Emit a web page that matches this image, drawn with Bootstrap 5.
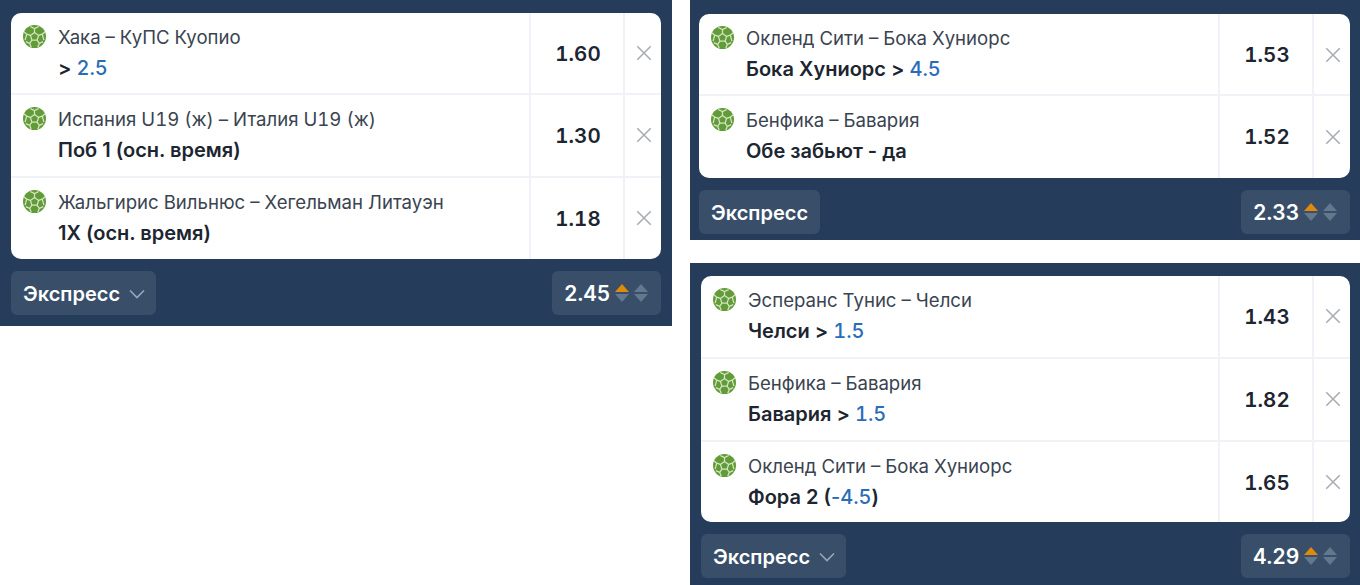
<!DOCTYPE html>
<html lang="en">
<head>
  <meta charset="UTF-8" />
  <meta name="viewport" content="width=device-width, initial-scale=1.0"/>
  <title>Coupons</title>
  <link href="https://cdn.jsdelivr.net/npm/bootstrap@5.3.2/dist/css/bootstrap.min.css" rel="stylesheet" />
  <style>
    body {
      background-color: #fff;
      font-family: Inter, "Liberation Sans", sans-serif;
      margin: 0;
      width: 1360px;
      height: 585px;
      overflow: hidden;
    }
    .col-left { width: 672px; margin-right: 18px; }
    .col-right { width: 670px; gap: 23px; }
    .slip { background-color: #253d5b; }
    .slip-a { height: 326px; padding: 13px 11px 11px 11px; }
    .slip-b { height: 240px; padding: 14px 10px 6px 9px; }
    .slip-c { height: 322px; padding: 13px 10px 6px 11px; }
    .bets { background-color: #fff; border-radius: 10px; overflow: hidden; }
    .bet { height: 82px; border-bottom: 2px solid #f1f2f7; }
    .bet:last-child { border-bottom: 0; }
    .slip-a .bet:nth-child(2) { height: 83px; }
    .slip-a .bet:last-child { height: 81px; }
    .slip-c .bet { height: 83px; }
    .slip-c .bet:last-child { height: 80px; }
    .bet-main { padding: 10px 0 0 12px; gap: 12px; min-width: 0; }
    .ball { width: 23px; height: 23px; flex: none; margin-top: 2px; }
    .teams { font-size: 18.6px; line-height: 28px; color: #3a4350; white-space: nowrap; font-variant-numeric: tabular-nums; }
    .pick { font-size: 20px; line-height: 28px; margin-top: 3px; font-weight: 600; color: #1c2530; white-space: nowrap; }
    .pick span { color: #2b6cb8; font-weight: 500; font-variant-numeric: tabular-nums; }
    .pick span.neg { font-variant-numeric: normal; }
    .rate { width: 94px; padding: 28px 0 0 3px; line-height: 26px; border-left: 2px solid #f1f2f7; font-size: 20.5px; font-weight: 600; color: #1c2530; font-variant-numeric: tabular-nums; }
    .drop { width: 38.500px; padding: 31px 0 0 2px; border-left: 2px solid #f1f2f7; }
    .slip-b .drop { padding-top: 32px; }
    .drop svg { width: 18px; height: 18px; }
    .slip-foot { margin-top: 12px; }
    .pill { height: 44px; padding-top: 1px; background-color: #384e69; border-radius: 6px; color: #fff; font-size: 20px; font-weight: 600; }
    .pill-type { padding-left: 12px; padding-right: 12px; gap: 9px; }
    .pill-type svg { width: 16px; height: 10px; margin-right: -1px; }
    .pill-odd { width: 109px; padding-left: 12px; font-size: 21px; font-variant-numeric: tabular-nums; gap: 5px; }
    .arrows { gap: 4px; }
    .arrow-pair { width: 15px; gap: 2px; margin-top: -1px; }
    .tri { width: 0; height: 0; border-left: 7.5px solid transparent; border-right: 7.5px solid transparent; }
    .tri-up { border-bottom: 8px solid #63778f; }
    .tri-down { border-top: 8px solid #63778f; }
    .tri-up.on { border-bottom-color: #e08a0c; }
  </style>
</head>
<body>
  <svg class="d-none">
    <symbol id="ball" viewBox="0 0 24 24">
      <circle cx="12" cy="12" r="12" fill="#619c38"/>
      <path d="M12 7.800l4.300 3.100-1.600 5h-5.400l-1.600-5z" fill="#619c38" stroke="#d5e4c3" stroke-width="1.300"/>
      <path d="M12 7.800V3.800M16.300 10.900l3.800-1.300M14.700 15.900l2.400 3.200M9.300 15.900l-2.400 3.200M7.700 10.900L3.900 9.600" stroke="#d5e4c3" stroke-width="1.300" fill="none"/>
      <path d="M7.500 1.500L12 3.800l4.500-2.300M20.100 9.600l3-2.600M20.100 9.600l1.700 6.100M17.100 19.100l4-1.700M17.100 19.100l-1.700 4.100M6.900 19.100l1.700 4.100M6.900 19.100l-4-1.700M3.900 9.600l-1.700 6.100M3.900 9.600L.9 7" stroke="#d5e4c3" stroke-width="1.300" fill="none"/>
    </symbol>
    <symbol id="cross" viewBox="0 0 16 16">
      <path d="M2 2l12 12M14 2L2 14" stroke="#a9adb3" stroke-width="1.400" fill="none"/>
    </symbol>
  </svg>

  <div class="d-flex">
    <div class="col-left">
      <div class="slip slip-a">
        <div class="bets" id="bets-a"></div>
        <div class="slip-foot d-flex justify-content-between">
          <div class="pill pill-type d-flex align-items-center">Экспресс
            <svg viewBox="0 0 16 10"><path d="M1 1.500l7 7 7-7" stroke="#9aa7b7" stroke-width="1.600" fill="none"/></svg>
          </div>
          <div class="pill pill-odd d-flex align-items-center"><span>2.45</span>
            <div class="arrows d-flex">
              <div class="arrow-pair d-flex flex-column"><i class="tri tri-up on"></i><i class="tri tri-down"></i></div>
              <div class="arrow-pair d-flex flex-column"><i class="tri tri-up"></i><i class="tri tri-down"></i></div>
            </div>
          </div>
        </div>
      </div>
    </div>
    <div class="col-right d-flex flex-column">
      <div class="slip slip-b">
        <div class="bets" id="bets-b"></div>
        <div class="slip-foot d-flex justify-content-between">
          <div class="pill pill-type d-flex align-items-center">Экспресс</div>
          <div class="pill pill-odd d-flex align-items-center"><span>2.33</span>
            <div class="arrows d-flex">
              <div class="arrow-pair d-flex flex-column"><i class="tri tri-up on"></i><i class="tri tri-down"></i></div>
              <div class="arrow-pair d-flex flex-column"><i class="tri tri-up"></i><i class="tri tri-down"></i></div>
            </div>
          </div>
        </div>
      </div>
      <div class="slip slip-c">
        <div class="bets" id="bets-c"></div>
        <div class="slip-foot d-flex justify-content-between">
          <div class="pill pill-type d-flex align-items-center">Экспресс
            <svg viewBox="0 0 16 10"><path d="M1 1.500l7 7 7-7" stroke="#9aa7b7" stroke-width="1.600" fill="none"/></svg>
          </div>
          <div class="pill pill-odd d-flex align-items-center"><span>4.29</span>
            <div class="arrows d-flex">
              <div class="arrow-pair d-flex flex-column"><i class="tri tri-up on"></i><i class="tri tri-down"></i></div>
              <div class="arrow-pair d-flex flex-column"><i class="tri tri-up"></i><i class="tri tri-down"></i></div>
            </div>
          </div>
        </div>
      </div>
    </div>
  </div>

  <script>
    const slips = {
      'bets-a': [
        ['Хака – КуПС Куопио', '&gt; <span>2.5</span>', '1.60'],
        ['Испания U19 (ж) – Италия U19 (ж)', 'Поб 1 (осн. время)', '1.30'],
        ['Жальгирис Вильнюс – Хегельман Литауэн', '1Х (осн. время)', '1.18']
      ],
      'bets-b': [
        ['Окленд Сити – Бока Хуниорс', 'Бока Хуниорс &gt; <span>4.5</span>', '1.53'],
        ['Бенфика – Бавария', 'Обе забьют - да', '1.52']
      ],
      'bets-c': [
        ['Эсперанс Тунис – Челси', 'Челси &gt; <span>1.5</span>', '1.43'],
        ['Бенфика – Бавария', 'Бавария &gt; <span>1.5</span>', '1.82'],
        ['Окленд Сити – Бока Хуниорс', 'Фора 2 (<span class="neg">-</span><span>4.5</span>)', '1.65']
      ]
    };

    for (const id in slips) {
      document.getElementById(id).innerHTML = slips[id].map(b => `
        <div class="bet d-flex">
          <div class="bet-main d-flex flex-grow-1">
            <svg class="ball"><use href="#ball"/></svg>
            <div>
              <div class="teams">${b[0]}</div>
              <div class="pick">${b[1]}</div>
            </div>
          </div>
          <div class="rate d-flex justify-content-center">${b[2]}</div>
          <div class="drop d-flex justify-content-center"><svg><use href="#cross"/></svg></div>
        </div>`).join('');
    }
  </script>
</body>
</html>
